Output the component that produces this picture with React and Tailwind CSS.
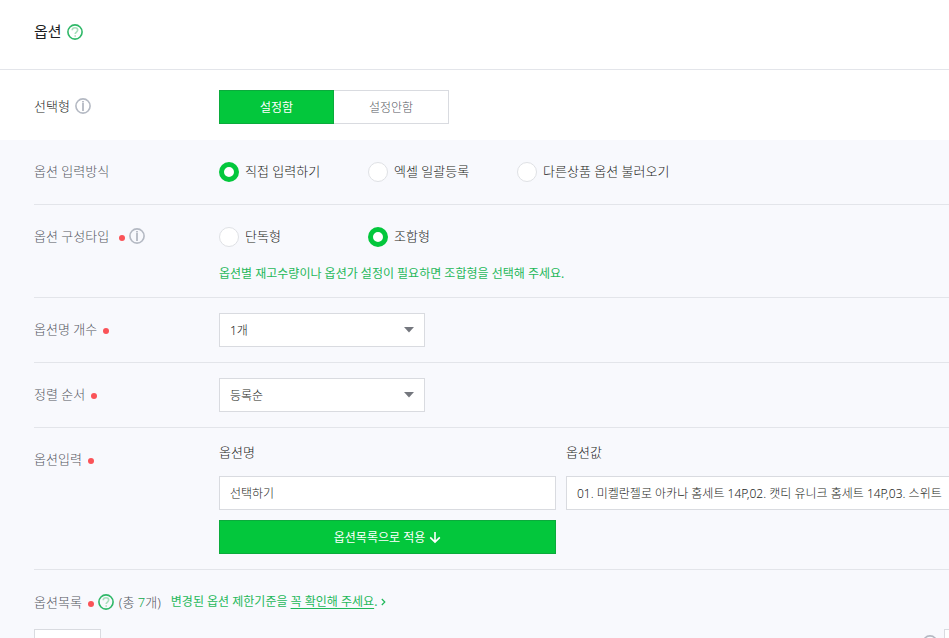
import React from "react";

function HelpIcon() {
  return (
    <svg width="16" height="16" viewBox="0 0 16 16" fill="none" className="shrink-0">
      <circle cx="8" cy="8" r="7.1" stroke="#2fb868" strokeWidth="1.6" />
      <path d="M5.2 6.3C5.2 4.6 6.4 3.7 8 3.7s2.7.9 2.7 2.4c0 1.9-2.5 2-2.5 4" stroke="#a9dfbc" strokeWidth="1.6" />
      <path d="M7.4 11.2h1.6v1.5H7.4z" fill="#a9dfbc" />
    </svg>
  );
}

function InfoIcon() {
  return (
    <svg width="16" height="16" viewBox="0 0 16 16" fill="none" className="shrink-0">
      <circle cx="8" cy="8" r="7.1" stroke="#b4b9c3" strokeWidth="1.6" />
      <path d="M8 3v1.6M8 5v8" stroke="#b4b9c3" strokeWidth="1.8" />
    </svg>
  );
}

function Required() {
  return <span className="mt-1 size-1.5 shrink-0 rounded-full bg-[#fa5358]" />;
}

function Row({ label, htmlFor, required, info, children }) {
  const Tag = htmlFor ? "label" : "span";
  return (
    <div className="ml-[34px] flex border-b border-[#e3e5ea] py-[15px]">
      <div className="flex h-[34px] w-[185px] shrink-0 items-center pb-0.5 text-[#55585f]">
        <Tag htmlFor={htmlFor}>{label}</Tag>
        {required && (
          <span className={info ? "ml-2.5 flex items-center gap-1" : "ml-1.5 flex items-center"}>
            <Required />
            {info && <InfoIcon />}
          </span>
        )}
      </div>
      <div className="min-w-0 flex-1">{children}</div>
    </div>
  );
}

function Radio({ name, id, label, checked }) {
  return (
    <div className="flex min-w-[149px] items-center gap-1.5">
      <input
        type="radio"
        name={name}
        id={id}
        defaultChecked={checked}
        className="size-5 shrink-0 appearance-none rounded-full border border-[#dfe1e5] bg-white checked:border-[5px] checked:border-[#03c73c]"
      />
      <label htmlFor={id} className="whitespace-nowrap pb-0.5">{label}</label>
    </div>
  );
}

function Select({ id, value }) {
  return (
    <div className="relative w-[206px]">
      <select id={id} defaultValue={value} className="h-[34px] w-full appearance-none border border-[#d9dbe0] bg-white px-2.5 pt-0.5 text-xs text-[#1c1e22]">
        <option value={value}>{value}</option>
      </select>
      <svg width="10" height="6" viewBox="0 0 10 6" className="pointer-events-none absolute top-3.5 right-[11px]">
        <path d="M0 0h10L5 5.4z" fill="#74777e" />
      </svg>
    </div>
  );
}

export default function App() {
  return (
    <main
      lang="ko"
      className="flex h-screen flex-col overflow-hidden bg-white font-['Noto_Sans','Noto_Sans_CJK_KR',sans-serif] text-[13px] font-light leading-5 text-[#1c1e22]"
    >
      <header className="flex h-[70px] shrink-0 items-center gap-[5px] border-b border-[#e3e5ea] px-[34px] pb-1.5">
        <h2 className="pb-0.5 text-[15px] font-normal text-[#1c1e22]">옵션</h2>
        <button type="button" aria-label="옵션"><HelpIcon /></button>
      </header>

      <div className="flex h-[70px] shrink-0 items-center pt-1 pb-0.5 pl-[34px]">
        <div className="flex w-[185px] shrink-0 items-center gap-[5px]">
          <span>선택형</span>
          <InfoIcon />
        </div>
        <div className="mt-0.5 flex text-xs">
          <button type="button" className="h-[34px] w-[115px] border border-[#0bab3c] bg-[#03c73c] pt-0.5 font-normal text-white">설정함</button>
          <button type="button" className="h-[34px] w-[115px] border border-l-0 border-[#d9dbe0] bg-white pt-0.5 text-[#55585f]">설정안함</button>
        </div>
      </div>

      <section className="flex-1 bg-[#f8f9fd]">
        <Row label="옵션 입력방식">
          <div className="flex h-[34px]">
            <Radio name="method" id="m1" label="직접 입력하기" checked />
            <Radio name="method" id="m2" label="엑셀 일괄등록" />
            <Radio name="method" id="m3" label="다른상품 옵션 불러오기" />
          </div>
        </Row>

        <Row label="옵션 구성타입" required info>
          <div className="flex h-[34px]">
            <Radio name="type" id="t1" label="단독형" />
            <Radio name="type" id="t2" label="조합형" checked />
          </div>
          <p className="mt-3 text-xs leading-4 font-normal text-[#1fb85a]">
            옵션별 재고수량이나 옵션가 설정이 필요하면 조합형을 선택해 주세요.
          </p>
        </Row>

        <Row label="옵션명 개수" htmlFor="count" required>
          <Select id="count" value="1개" />
        </Row>

        <Row label="정렬 순서" htmlFor="order" required>
          <Select id="order" value="등록순" />
        </Row>

        <Row label="옵션입력" required>
          <div className="flex gap-2.5">
            <div className="flex w-[337px] shrink-0 flex-col">
              <label htmlFor="name" className="h-[33px] leading-[18px]">옵션명</label>
              <input
                id="name"
                defaultValue="선택하기"
                className="h-[34px] border border-[#d9dbe0] bg-white px-2.5 text-xs"
              />
              <button type="button" className="mt-2.5 flex h-[34px] items-center justify-center gap-1 border border-[#0bab3c] bg-[#03c73c] pt-0.5 text-xs font-normal text-white">
                옵션목록으로 적용
                <svg width="12" height="12" viewBox="0 0 12 12" fill="none" stroke="currentColor" strokeWidth="1.6">
                  <path d="M6 0v10M1.2 5.4 6 10.1l4.8-4.7" />
                </svg>
              </button>
            </div>
            <div className="flex min-w-0 flex-1 flex-col">
              <label htmlFor="values" className="h-[33px] leading-[18px]">옵션값</label>
              <input
                id="values"
                defaultValue="01. 미켈란젤로 아카나 홈세트 14P,02. 캣티 유니크 홈세트 14P,03. 스위트"
                className="h-[34px] w-full border border-r-0 border-[#d9dbe0] bg-white pl-2.5 text-xs"
              />
            </div>
          </div>
        </Row>

        <div className="flex h-[59px] items-center pt-1 pl-[34px] text-[#55585f]">
          <span>옵션목록</span>
          <span className="mr-[5px] ml-1.5 flex items-center gap-1">
            <Required />
            <HelpIcon />
          </span>
          <span>(총 <span className="text-[#0fa84a]">7</span>개)</span>
          <a href="#limits" className="ml-2.5 flex items-center text-xs font-normal text-[#1fb85a]">
            <span>변경된 옵션 제한기준을 <span className="underline underline-offset-2">꼭 확인해 주세요</span>.</span>
            <svg width="5" height="8" viewBox="0 0 5 8" fill="none" stroke="currentColor" strokeWidth="1.2" className="ml-1">
              <path d="m.8 1 3 3-3 3" />
            </svg>
          </a>
        </div>

        <div className="flex justify-between pl-[34px]">
          <button type="button" aria-label="옵션목록" className="h-[34px] w-[67px] border border-[#d9dbe0] bg-white" />
          <div className="flex gap-1.5">
            <span className="pt-1.5"><InfoIcon /></span>
            <span className="h-[34px] w-[5px] border border-r-0 border-[#d9dbe0] bg-white" />
          </div>
        </div>
      </section>
    </main>
  );
}
